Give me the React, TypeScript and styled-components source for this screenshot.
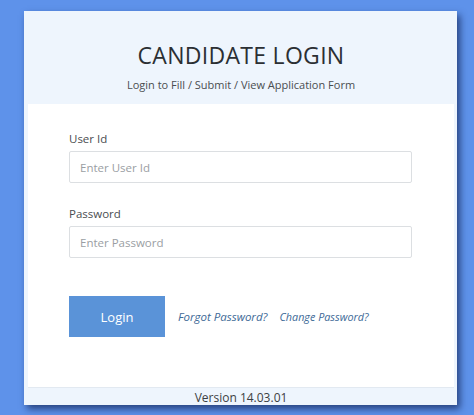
import React from "react";
import styled, { createGlobalStyle } from "styled-components";

const Global = createGlobalStyle`
  html, body { margin: 0; padding: 0; }
  body {
    background: #5e92ea;
    font-family: "Open Sans", "Noto Sans", sans-serif;
    width: 474px;
    height: 415px;
    overflow: hidden;
  }
`;

const Page = styled.div`
  width: 474px;
  height: 415px;
  padding: 11px 0 0 24px;
  box-sizing: border-box;
`;

const Card = styled.div`
  width: 433px;
  height: 394px;
  background: #eef5fd;
  padding: 0 3px 0 4px;
  box-sizing: border-box;
  display: flex;
  flex-direction: column;
  box-shadow: 3px 4px 7px rgba(10, 25, 70, 0.65);
`;

const Header = styled.div`
  height: 93px;
  display: flex;
  flex-direction: column;
  align-items: center;
  padding-top: 28px;
  box-sizing: border-box;
`;

const Title = styled.h1`
  margin: 0;
  font-size: 23px;
  font-weight: 400;
  letter-spacing: 0.3px;
  color: #2b2f33;
  line-height: 32px;
`;

const Subtitle = styled.div`
  margin-top: 6px;
  font-size: 11px;
  color: #4a4d50;
  line-height: 16px;
`;

const Body = styled.div`
  flex: 1;
  background: #ffffff;
  padding: 26px 42px 0 41px;
  display: flex;
  flex-direction: column;
`;

const Field = styled.div<{ $gap?: number }>`
  display: flex;
  flex-direction: column;
  margin-top: ${(p) => p.$gap ?? 0}px;
`;

const Label = styled.label`
  font-size: 11.5px;
  color: #4a4d50;
  line-height: 17px;
  margin-bottom: 4px;
`;

const Input = styled.input`
  height: 32px;
  box-sizing: border-box;
  border: 1px solid #dcdfe2;
  border-radius: 2px;
  padding: 0 10px;
  font-family: "Open Sans", "Noto Sans", sans-serif;
  font-size: 11.5px;
  color: #333;
  outline: none;
  &::placeholder { color: #9a9ea3; }
`;

const Actions = styled.div`
  display: flex;
  align-items: center;
  margin-top: 38px;
`;

const LoginButton = styled.button`
  width: 96px;
  height: 41px;
  border: none;
  background: #5a93d8;
  color: #ffffff;
  font-family: "Open Sans", "Noto Sans", sans-serif;
  font-size: 13px;
  margin-right: 13px;
  padding: 0;
`;

const LinkText = styled.a<{ $mr?: number; $size?: number }>`
  font-style: italic;
  font-size: ${(p) => p.$size ?? 11.5}px;
  color: #3e6a97;
  text-decoration: none;
  margin-right: ${(p) => p.$mr ?? 0}px;
`;

const Footer = styled.div`
  height: 18px;
  border-top: 1px solid #e2e9f1;
  box-sizing: border-box;
  display: flex;
  align-items: center;
  justify-content: center;
  padding-top: 2px;
  font-size: 12px;
  color: #3c3f42;
  line-height: 16px;
`;

export default function App() {
  return (
    <>
      <Global />
      <Page>
        <Card>
          <Header>
            <Title>CANDIDATE LOGIN</Title>
            <Subtitle>Login to Fill / Submit / View Application Form</Subtitle>
          </Header>
          <Body>
            <Field>
              <Label>User Id</Label>
              <Input placeholder="Enter User Id" />
            </Field>
            <Field $gap={22}>
              <Label>Password</Label>
              <Input type="password" placeholder="Enter Password" />
            </Field>
            <Actions>
              <LoginButton>Login</LoginButton>
              <LinkText href="#" $mr={12}>Forgot Password?</LinkText>
              <LinkText href="#" $size={10.8}>Change Password?</LinkText>
            </Actions>
          </Body>
          <Footer>Version 14.03.01</Footer>
        </Card>
      </Page>
    </>
  );
}
